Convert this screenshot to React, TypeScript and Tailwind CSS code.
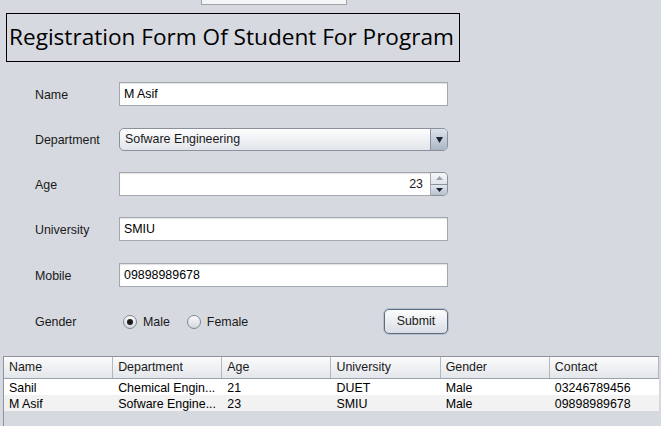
import React from "react";

const rows = [
  ["Sahil", "Chemical Engin...", "21", "DUET", "Male", "03246789456"],
  ["M Asif", "Sofware Engine...", "23", "SMIU", "Male", "09898989678"],
];
const cols = ["Name", "Department", "Age", "University", "Gender", "Contact"];

function Label({ children }: { children: React.ReactNode }) {
  return <div className="w-[84px] shrink-0 pl-[35px] pt-[2px] box-content text-[12.4px] text-[#1a1a1a]">{children}</div>;
}

function Field({ value }: { value: string }) {
  return (
    <div className="flex h-[24px] w-[329px] items-center border border-[#a3a8b0] bg-white pl-[4px] text-[12.4px] text-black shadow-[inset_0_1px_1px_rgba(0,0,0,0.12)]">
      {value}
    </div>
  );
}

function Radio({ checked, label }: { checked?: boolean; label: string }) {
  return (
    <div className="flex items-center gap-[6px]">
      <span className="flex h-[14px] w-[14px] items-center justify-center rounded-full border border-[#7f8791] bg-gradient-to-b from-[#fbfbfc] to-[#d3d7dd]">
        {checked && <span className="h-[6px] w-[6px] rounded-full bg-[#1c1c1c]" />}
      </span>
      <span>{label}</span>
    </div>
  );
}

export default function App() {
  return (
    <div
      className="h-[426px] w-[661px] overflow-hidden bg-[#d6d9df] text-[12.4px] text-[#1a1a1a]"
      style={{ fontFamily: '"Liberation Sans", Arial, sans-serif' }}
    >
      <div className="ml-[201px] h-[5px] w-[146px] border-x border-b border-[#a0a4ab] bg-[#f4f5f7]" />

      <div className="ml-[6px] mt-[8px] flex h-[49px] w-[454px] items-center border border-black pl-[2px]">
        <span
          className="whitespace-nowrap text-[22.6px] leading-none text-black"
          style={{ fontFamily: '"Open Sans", "Noto Sans", sans-serif' }}
        >
          Registration Form Of Student For Program
        </span>
      </div>

      {/* Name */}
      <div className="mt-[20px] flex items-center">
        <Label>Name</Label>
        <Field value="M Asif" />
      </div>

      {/* Department */}
      <div className="mt-[22px] flex items-center">
        <Label>Department</Label>
        <div className="flex h-[23px] w-[329px] items-stretch overflow-hidden rounded-[5px] border border-[#8a919b] bg-gradient-to-b from-[#fdfdfe] to-[#e2e5ea]">
          <div className="flex flex-1 items-center pl-[5px]">Sofware Engineering</div>
          <div className="flex w-[17px] items-center justify-center border-l border-[#8a919b] bg-gradient-to-b from-[#dde3ec] to-[#aab6c6]">
            <svg width="7" height="6" viewBox="0 0 7 6">
              <path d="M0 0h7L3.5 6z" fill="#1c2430" />
            </svg>
          </div>
        </div>
      </div>

      {/* Age */}
      <div className="mt-[21px] flex items-center">
        <Label>Age</Label>
        <div className="flex h-[24px] w-[329px] items-stretch">
          <div className="flex flex-1 items-center justify-end border border-[#a3a8b0] bg-white pr-[7px] shadow-[inset_0_1px_1px_rgba(0,0,0,0.12)]">
            23
          </div>
          <div className="flex w-[17px] flex-col overflow-hidden rounded-r-[5px] border border-l-0 border-[#8a919b]">
            <div className="flex flex-1 items-center justify-center border-b border-[#8a919b] bg-gradient-to-b from-[#f6f8fa] to-[#dfe4ea]">
              <svg width="7" height="4" viewBox="0 0 7 4">
                <path d="M0 4h7L3.5 0z" fill="#9aa3ae" />
              </svg>
            </div>
            <div className="flex flex-1 items-center justify-center bg-gradient-to-b from-[#e4e9ef] to-[#b5c0cd]">
              <svg width="7" height="4" viewBox="0 0 7 4">
                <path d="M0 0h7L3.5 4z" fill="#1c2430" />
              </svg>
            </div>
          </div>
        </div>
      </div>

      {/* University */}
      <div className="mt-[21px] flex items-center">
        <Label>University</Label>
        <Field value="SMIU" />
      </div>

      {/* Mobile */}
      <div className="mt-[22px] flex items-center">
        <Label>Mobile</Label>
        <Field value="09898989678" />
      </div>

      {/* Gender */}
      <div className="mt-[22px] flex h-[25px] w-[448px] items-center">
        <Label>Gender</Label>
        <div className="ml-[4px] flex items-center gap-[17px] pt-[1px]">
          <Radio checked label="Male" />
          <Radio label="Female" />
        </div>
        <button className="ml-auto h-[25px] w-[64px] rounded-[5px] border border-[#5f6c80] bg-gradient-to-b from-[#fbfcfd] to-[#d9dee5] text-[12.4px] text-[#1a1a1a] shadow-[0_0_0_1px_rgba(140,160,190,0.45)]">
          Submit
        </button>
      </div>

      {/* Table */}
      <div className="ml-[3px] mt-[22px] h-[80px] w-[656px] border-l border-t border-[#8d939c] bg-[#d6d9df]">
        <div className="grid h-[22px] grid-cols-6 border-b border-[#9ba1aa] bg-gradient-to-b from-[#fbfbfc] to-[#e3e6ea]">
          {cols.map((c) => (
            <div key={c} className="flex items-center border-r border-[#b3b8bf] pl-[5px]">
              {c}
            </div>
          ))}
        </div>
        {rows.map((r, i) => (
          <div key={i} className={`grid h-[16px] grid-cols-6 ${i === 0 ? "bg-white" : "bg-[#f2f2f2]"}`}>
            {r.map((v, j) => (
              <div key={j} className="flex items-center pl-[5px] text-black">
                {v}
              </div>
            ))}
          </div>
        ))}
      </div>
    </div>
  );
}
